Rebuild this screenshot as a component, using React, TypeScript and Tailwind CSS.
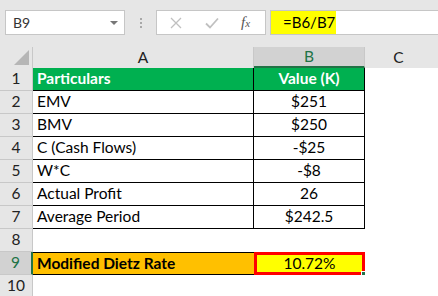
import React from 'react';

type Row = { n: number; a: string; b: string };

const rows: Row[] = [
  { n: 2, a: 'EMV', b: '$251' },
  { n: 3, a: 'BMV', b: '$250' },
  { n: 4, a: 'C (Cash Flows)', b: '-$25' },
  { n: 5, a: 'W*C', b: '-$8' },
  { n: 6, a: 'Actual Profit', b: '26' },
  { n: 7, a: 'Average Period', b: '$242.5' },
];

const RowHead = ({ n, active = false }: { n: number; active?: boolean }) => (
  <div
    className={
      active
        ? 'w-[33px] shrink-0 h-full flex items-center justify-center bg-[#d2d2d2] text-[#217346] border-r-2 border-r-[#217346] border-b border-b-[#c8c8c8]'
        : 'w-[33px] shrink-0 h-full flex items-center justify-center bg-[#e6e6e6] text-[#222] border-r border-r-[#c8c8c8] border-b border-b-[#c8c8c8]'
    }
  >
    {n}
  </div>
);

export default function App() {
  return (
    <div
      className="w-[438px] h-[296px] overflow-hidden bg-[#e6e6e6] text-[15.5px] text-black"
      style={{ fontFamily: 'Lato, "Noto Sans", sans-serif' }}
    >
      {/* Barre de formule */}
      <div className="h-[47px] pt-[10px] flex items-start">
        <div className="ml-[5px] w-[120px] h-[25px] bg-white border border-[#c6c6c6] flex items-center justify-between pl-[7px] pr-[6px] text-[14px] text-[#333]">
          <span>B9</span>
          <span className="w-0 h-0 border-l-[4px] border-r-[4px] border-t-[4px] border-l-transparent border-r-transparent border-t-[#777]" />
        </div>
        <div className="w-[31px] h-[25px] flex flex-col items-center justify-center gap-[2px]">
          <span className="w-[2px] h-[2px] bg-[#a8a8a8]" />
          <span className="w-[2px] h-[2px] bg-[#a8a8a8]" />
          <span className="w-[2px] h-[2px] bg-[#a8a8a8]" />
        </div>
        <div className="w-[110px] h-[25px] bg-white border border-[#c6c6c6] flex items-center">
          <svg width="12" height="12" viewBox="0 0 12 12" className="ml-[13px]">
            <path d="M1 1 L11 11 M11 1 L1 11" stroke="#c0c0c0" strokeWidth="1.3" fill="none" />
          </svg>
          <svg width="14" height="12" viewBox="0 0 14 12" className="ml-[23px]">
            <path d="M1 6.5 L5 10.5 L13 1.5" stroke="#c0c0c0" strokeWidth="1.8" fill="none" />
          </svg>
          <span
            className="ml-[22px] text-[15px] italic text-[#555]"
            style={{ fontFamily: '"Liberation Serif", serif' }}
          >
            f<span className="text-[11px]">x</span>
          </span>
        </div>
        <div className="ml-[4px] flex-1 h-[25px] bg-white border border-[#c6c6c6] border-r-0 flex">
          <div className="w-[65px] h-full bg-[#ffff00] flex items-center pl-[12px] text-[15px]">=B6/B7</div>
        </div>
      </div>

      {/* En-têtes de colonnes */}
      <div className="h-[21px] flex">
        <div className="w-[33px] shrink-0 h-full bg-[#e6e6e6] border-r border-r-[#c8c8c8] flex items-end justify-end pr-[3px] pb-[3px]">
          <svg width="15" height="15" viewBox="0 0 15 15">
            <polygon points="15,0 15,15 0,15" fill="#b6b6b6" />
          </svg>
        </div>
        <div className="w-[221px] shrink-0 h-full bg-[#e6e6e6] border-r border-r-[#c8c8c8] flex items-center justify-center text-[#222]">A</div>
        <div className="w-[111px] shrink-0 h-full bg-[#d2d2d2] border-b-2 border-b-[#217346] border-r border-r-[#c8c8c8] flex items-center justify-center text-[#217346]">B</div>
        <div className="flex-1 h-full bg-[#e6e6e6] flex items-center justify-center text-[#222] pr-[6px]">C</div>
      </div>

      {/* Grille */}
      <div className="bg-white">
        <div className="h-[23px] flex">
          <RowHead n={1} />
          <div className="w-[221px] shrink-0 h-full bg-[#00b050] border-b border-r border-black flex items-center pl-[4px] font-bold text-white">Particulars</div>
          <div className="w-[111px] shrink-0 h-full bg-[#00b050] border-b border-r border-black flex items-center justify-center font-bold text-white">Value (K)</div>
          <div className="flex-1 h-full bg-white" />
        </div>
        {rows.map((r) => (
          <div key={r.n} className="h-[23px] flex">
            <RowHead n={r.n} />
            <div className="w-[221px] shrink-0 h-full border-b border-r border-black flex items-center pl-[4px]">{r.a}</div>
            <div className="w-[111px] shrink-0 h-full border-b border-r border-black flex items-center justify-center">{r.b}</div>
            <div className="flex-1 h-full bg-white" />
          </div>
        ))}
        <div className="h-[23px] flex">
          <RowHead n={8} />
          <div className="flex-1 h-full bg-white" />
        </div>
        <div className="h-[23px] flex">
          <RowHead n={9} active />
          <div className="w-[221px] shrink-0 h-full bg-[#ffc000] border-y border-black flex items-center pl-[4px] font-bold">Modified Dietz Rate</div>
          <div className="relative w-[111px] shrink-0 h-full bg-[#ffff00] border-[3px] border-[#ff0000] flex items-center justify-center">
            10.72%
            <span className="absolute -right-[4px] -bottom-[4px] w-[5px] h-[5px] bg-[#217346] border border-white" />
          </div>
          <div className="flex-1 h-full bg-white" />
        </div>
        <div className="h-[23px] flex">
          <RowHead n={10} />
          <div className="flex-1 h-full bg-white" />
        </div>
      </div>
    </div>
  );
}
